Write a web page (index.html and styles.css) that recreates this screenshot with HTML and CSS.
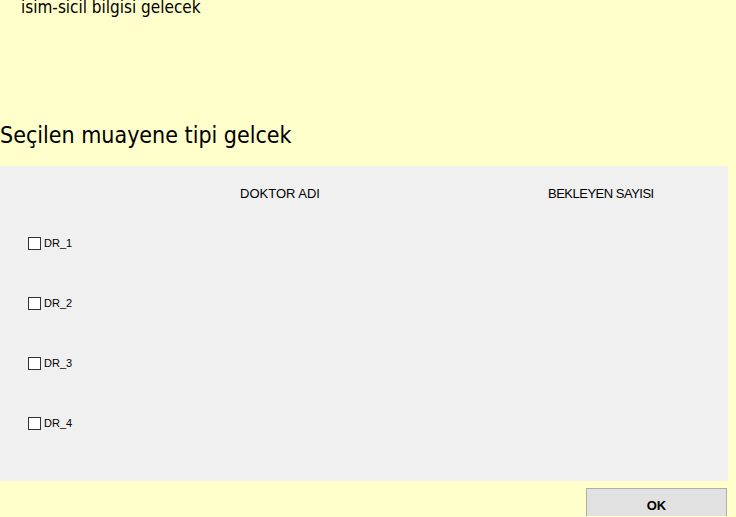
FILE: index.html
```html
<!DOCTYPE html>
<html lang="tr">
<head>
<meta charset="utf-8">
<link rel="stylesheet" href="styles.css">
</head>
<body>
<div class="page">
  <div class="info">isim-sicil bilgisi gelecek</div>
  <h1 class="title">Seçilen muayene tipi gelcek</h1>
  <div class="panel">
    <div class="head">
      <span class="col-name">DOKTOR ADI</span>
      <span class="col-count">BEKLEYEN SAYISI</span>
    </div>
    <label class="row"><span class="box"></span>DR_1</label>
    <label class="row"><span class="box"></span>DR_2</label>
    <label class="row"><span class="box"></span>DR_3</label>
    <label class="row"><span class="box"></span>DR_4</label>
  </div>
  <div class="actions">
    <button class="ok">OK</button>
  </div>
</div>
</body>
</html>
```

FILE: styles.css
```css
html, body {
  margin: 0;
  padding: 0;
  background: #ffffcc;
  overflow: hidden;
}
.page {
  width: 736px;
  height: 517px;
  font-family: "DejaVu Sans Condensed", "DejaVu Sans", sans-serif;
  font-stretch: condensed;
  color: #000;
}
.info {
  font-size: 17px;
  line-height: 17px;
  margin: -1px 0 0 21px;
  height: 110px;
}
.title {
  margin: 0;
  font-weight: normal;
  font-size: 23px;
  line-height: 40px;
  height: 40px;
  padding: 6px 0 11px;
}
.panel {
  width: 728px;
  height: 315px;
  background: #f0f0f0;
  box-sizing: border-box;
  padding-top: 20px;
}
.head {
  display: flex;
  font-family: "Liberation Sans", sans-serif;
  font-size: 13px;
  line-height: 16px;
  height: 51px;
}
.col-name {
  margin-left: 240px;
  width: 308px;
}
.col-count {
  letter-spacing: -0.5px;
}
.row {
  display: flex;
  align-items: center;
  margin-left: 28px;
  font-family: "Liberation Sans", sans-serif;
  font-size: 11px;
  line-height: 13px;
  height: 13px;
  margin-bottom: 47px;
}
.box {
  width: 13px;
  height: 13px;
  box-sizing: border-box;
  border: 1px solid #333;
  background: #fff;
  margin-right: 3px;
}
.actions {
  display: flex;
  justify-content: flex-end;
  padding: 7px 9px 0 0;
}
.ok {
  width: 141px;
  height: 32px;
  background: #e1e1e1;
  border: 1px solid #adadad;
  font-family: "Liberation Sans", sans-serif;
  font-weight: bold;
  font-size: 13px;
  padding: 2px 0 0;
  color: #000;
}
```
